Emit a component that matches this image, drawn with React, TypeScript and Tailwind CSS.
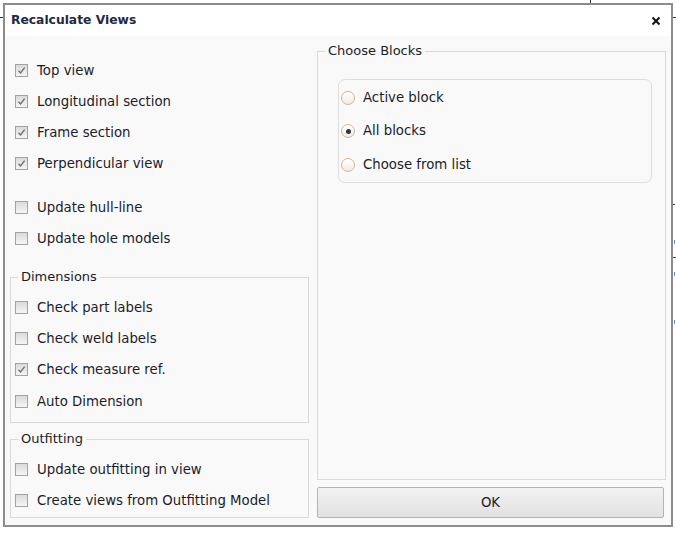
import React from "react";

const font = { fontFamily: '"DejaVu Sans", Verdana, sans-serif' };

function Check({ checked, label }: { checked?: boolean; label: string }) {
  return (
    <div className="flex h-[31px] items-center">
      <span className="ml-[5px] flex h-[13px] w-[13px] items-center justify-center border border-[#a3a3a3] bg-gradient-to-b from-[#dadada] to-[#f5f5f5]">
        {checked && (
          <svg width="9" height="9" viewBox="0 0 9 9">
            <path d="M1.5 4.8 L3.6 7 L7.6 1.6" fill="none" stroke="#6e6e6e" strokeWidth="1.3" />
          </svg>
        )}
      </span>
      <span className="ml-[9px] text-[13.3px] text-[#1c1c28]">{label}</span>
    </div>
  );
}

function Radio({ checked, label }: { checked?: boolean; label: string }) {
  return (
    <div className="flex h-[33.5px] items-center">
      <span className="ml-[2px] flex h-[14px] w-[14px] items-center justify-center rounded-full border border-[#d2b39c] bg-gradient-to-b from-[#ffffff] to-[#f1ebe6]">
        {checked && <span className="h-[5px] w-[5px] rounded-full bg-[#2c3446]" />}
      </span>
      <span className="ml-[8px] text-[13.3px] text-[#1c1c28]">{label}</span>
    </div>
  );
}

function Group({ title, className, children }: { title: string; className?: string; children: React.ReactNode }) {
  return (
    <fieldset className={"border border-[#d9d9d9] " + (className ?? "")}>
      <legend className="ml-[7px] px-[3px] text-[13px] leading-[16px] text-[#1c1c28]">{title}</legend>
      {children}
    </fieldset>
  );
}

export default function App() {
  return (
    <div className="relative h-[533px] w-[676px] overflow-hidden bg-white pl-[3px] pt-[3px]" style={font}>
      {/* stray marks from the window behind */}
      <div className="absolute left-[590px] top-0 h-[3px] w-px bg-[#333]" />
      <div className="absolute left-0 top-[17px] h-px w-[3px] bg-[#333]" />
      <div className="absolute right-0 top-[17px] h-px w-[3px] bg-[#333]" />
      <div className="absolute right-[1px] top-[204px] h-px w-[2px] bg-[#2233aa]" />
      <div className="absolute right-[1px] top-[240px] h-[4px] w-px bg-[#5599dd]" />
      <div className="absolute right-0 top-[257px] h-px w-[3px] bg-[#444]" />
      <div className="absolute right-[1px] top-[272px] h-[4px] w-px bg-[#5599dd]" />
      <div className="absolute right-[1px] top-[320px] h-[4px] w-px bg-[#5599dd]" />

      <div className="flex h-[524px] w-[670px] flex-col border-2 border-[#8c8c8c] bg-[#f9f9f9]">
        <div className="flex h-[31px] items-center justify-between bg-white pl-[6px] pr-[10px]">
          <span className="text-[12.3px] font-bold text-[#1e2a40]">Recalculate Views</span>
          <svg width="10" height="10" viewBox="0 0 10 10">
            <path d="M1.5 1.5 L8.5 8.5 M8.5 1.5 L1.5 8.5" stroke="#111" strokeWidth="2" />
          </svg>
        </div>

        <div className="flex flex-1 gap-[8px] pl-[5px] pr-[5px]">
          <div className="flex w-[299px] flex-col">
            <div className="pt-[19px]">
              <Check checked label="Top view" />
              <Check checked label="Longitudinal section" />
              <Check checked label="Frame section" />
              <Check checked label="Perpendicular view" />
            </div>
            <div className="pt-[13px]">
              <Check label="Update hull-line" />
              <Check label="Update hole models" />
            </div>
            <Group title="Dimensions" className="mt-[15px] pb-[5px] pt-[7px]">
              <div className="-ml-[1px]">
                <Check label="Check part labels" />
                <Check label="Check weld labels" />
                <Check checked label="Check measure ref." />
                <div className="pt-[1px]">
                  <Check label="Auto Dimension" />
                </div>
              </div>
            </Group>
            <Group title="Outfitting" className="mt-[8px] pb-[1px] pt-[7px]">
              <div className="-ml-[1px]">
                <Check label="Update outfitting in view" />
                <Check label="Create views from Outfitting Model" />
              </div>
            </Group>
          </div>

          <div className="flex flex-1 flex-col">
            <Group title="Choose Blocks" className="mt-[7px] h-[437px]">
              <div className="pl-[20px] pr-[13px] pt-[20px]">
                <div className="h-[104px] rounded-[7px] border border-[#dedede] pt-[1px]">
                  <Radio label="Active block" />
                  <Radio checked label="All blocks" />
                  <Radio label="Choose from list" />
                </div>
              </div>
            </Group>
            <button className="mt-[7px] h-[31px] w-[347px] rounded-[2px] border border-[#b4b4b4] bg-gradient-to-b from-[#f2f2f2] to-[#e1e1e1] text-[13.3px] text-[#1c1c28]">
              OK
            </button>
          </div>
        </div>
      </div>
    </div>
  );
}
